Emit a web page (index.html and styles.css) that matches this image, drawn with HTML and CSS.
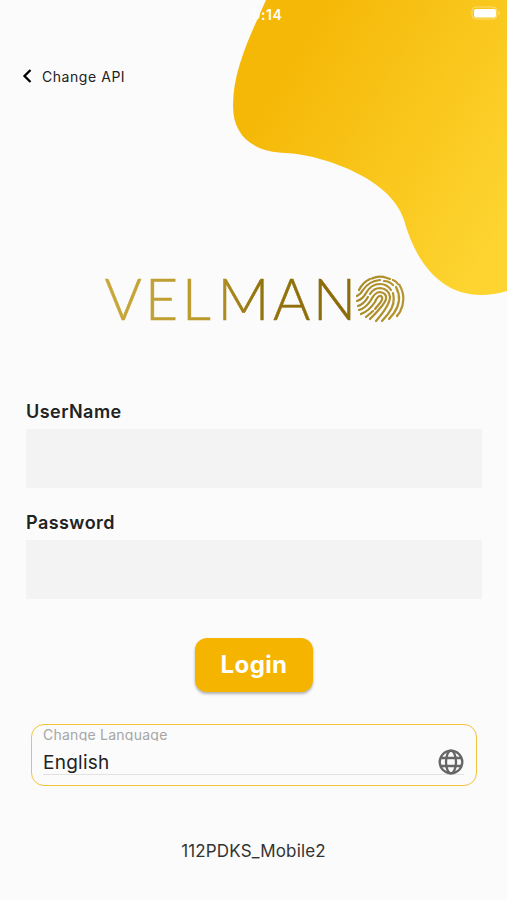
FILE: index.html
```html
<!DOCTYPE html>
<html lang="en">
<head>
  <meta charset="UTF-8">
  <meta name="viewport" content="width=device-width, initial-scale=1.0">
  <title>Velmano Login</title>
  <link rel="stylesheet" href="styles.css">
</head>
<body>
  <svg class="blob" width="287" height="300" viewBox="220 0 287 300">
    <defs>
      <linearGradient id="yellow" gradientUnits="userSpaceOnUse" x1="270" y1="90" x2="500" y2="230">
        <stop offset="0" stop-color="#f5b807"/>
        <stop offset="1" stop-color="#fdd430"/>
      </linearGradient>
    </defs>
    <path fill="url(#yellow)" d="M266 0C250 36 233 70 233 106C233 135 252 152 286 153C315 154 390 175 404 220C416 264 442 295 481 295Q494 295 507 291V0Z"/>
  </svg>

  <header class="status-bar">
    <span class="time">9:14</span>
    <svg class="battery" width="30" height="14" viewBox="0 0 30 14">
      <rect x="1" y="1" width="25" height="12" rx="4" fill="none" stroke="#fff" stroke-opacity=".4"/>
      <rect x="3" y="3" width="22" height="8.500" rx="2" fill="#fff"/>
      <path d="M27.500 5v4q1.500-.5 1.500-2t-1.500-2" fill="#fff" fill-opacity=".4"/>
    </svg>
  </header>

  <a class="back" href="#">
    <svg width="10" height="14" viewBox="0 0 10 14"><path d="M8.500 1L2.500 7l6 6" fill="none" stroke="#000" stroke-width="2.300"/></svg>
    <span>Change API</span>
  </a>

  <div class="logo">
    <svg width="304" height="72" viewBox="102 264 304 72">
      <defs>
        <linearGradient id="gold" gradientUnits="userSpaceOnUse" x1="105" y1="0" x2="405" y2="0">
          <stop offset="0" stop-color="#c9a83a"/>
          <stop offset=".35" stop-color="#b9982c"/>
          <stop offset=".5" stop-color="#94750d"/>
          <stop offset=".8" stop-color="#8a6a08"/>
          <stop offset="1" stop-color="#bb9a35"/>
        </linearGradient>
        <linearGradient id="print" gradientUnits="userSpaceOnUse" x1="356" y1="0" x2="405" y2="0">
          <stop offset="0" stop-color="#a88a26"/>
          <stop offset="1" stop-color="#b5952f"/>
        </linearGradient>
      </defs>
      <text class="wordmark" y="320" x="104.500 145 182 217.500 273 313">VELMAN</text>
      <g fill="none" stroke="url(#print)" stroke-width="2.200" stroke-linecap="round">
        <path d="M359 290Q363 282 370 279M372 278.500Q379 275 387 278L390 279M393 280Q396 281 398 284M399.500 285Q407 298 400 312L397 316"/>
        <path d="M357 296Q361 294 363 290Q369 281 380 280M384 281Q389 281 393 285M396 287Q403 300 394 313L389 319"/>
        <path d="M357 301Q363 299 366 293Q371 284 380 284Q387 284 391 290M393 293Q396 304 388 314L382 321"/>
        <path d="M358 306Q364 304 368 297M370 294Q374 288 380 288Q389 289 390 297Q390 305 376 321"/>
        <path d="M359 310Q366 308 371 300Q375 292 380 292Q387 293 386 299Q385 304 370 319"/>
        <path d="M361 314Q369 311 375 302Q378 295 381 296Q384 298 380 303L375 309M373 311L366 317"/>
      </g>
    </svg>
  </div>

  <form class="login-form">
    <label for="username">UserName</label>
    <input type="text" id="username">
    <label for="password">Password</label>
    <input type="password" id="password">
    <button type="button">Login</button>
  </form>

  <div class="language">
    <span class="language-label">Change Language</span>
    <div class="language-value">
      <span>English</span>
      <svg width="26" height="26" viewBox="0 0 26 26" fill="none" stroke="#666" stroke-width="2.300">
        <circle cx="13" cy="13" r="11.300"/>
        <ellipse cx="13" cy="13" rx="5" ry="11.300"/>
        <path d="M2 9h22M2 17h22"/>
      </svg>
    </div>
  </div>

  <footer>112PDKS_Mobile2</footer>
</body>
</html>
```

FILE: styles.css
```css
* {
  box-sizing: border-box;
}
body {
  margin: 0;
  height: 900px;
  background-color: #fbfbfb;
  font-family: Inter, sans-serif;
  color: #222;
  display: flex;
  flex-direction: column;
  overflow: hidden;
}
.blob {
  position: absolute;
  top: 0;
  right: 0;
  z-index: -1;
}
.status-bar {
  height: 28px;
  display: grid;
  grid-template-columns: 1fr auto 1fr;
  align-items: center;
  padding: 0 6px;
  color: #fff;
  font-size: 14px;
  font-weight: 600;
  letter-spacing: 0.6px;
}
.time {
  grid-column: 2;
  padding-left: 27px;
}
.battery {
  justify-self: end;
  margin-top: -2px;
}
.back {
  display: flex;
  align-items: center;
  gap: 10px;
  height: 24px;
  margin: 36px 0 0 22px;
  color: #222;
  font-size: 14px;
  letter-spacing: 0.55px;
  text-decoration: none;
}
.logo {
  height: 72px;
  margin: 176px 0 0 102px;
}
.wordmark {
  font-family: Lato, sans-serif;
  font-size: 57px;
  font-weight: 300;
  fill: url(#gold);
  stroke: url(#gold);
  stroke-width: 0.5px;
}
.login-form {
  display: flex;
  flex-direction: column;
  margin: 64px 25px 0 26px;
}
label {
  height: 29px;
  line-height: 24px;
  font-size: 18px;
  font-weight: 600;
  letter-spacing: 0.45px;
}
input {
  width: 100%;
  height: 59px;
  margin-bottom: 23px;
  padding: 0 12px;
  border: none;
  background-color: #f3f3f3;
  font-size: 18px;
}
button {
  align-self: center;
  width: 118px;
  height: 54px;
  margin-top: 16px;
  padding-bottom: 3px;
  border: none;
  border-radius: 12px;
  background-color: #f5b400;
  box-shadow: 0 2px 3px rgba(0,0,0,0.3);
  color: #fff;
  font-family: inherit;
  font-size: 24px;
  font-weight: 700;
  letter-spacing: 0.4px;
}
.language {
  height: 62px;
  margin: 32px 30px 0 31px;
  padding: 0 12px 0 11px;
  border: 1.5px solid #f3c33c;
  border-radius: 13px;
}
.language-label {
  display: block;
  height: 16px;
  line-height: 19px;
  overflow: hidden;
  color: #a6a6a6;
  font-size: 14px;
  letter-spacing: 0.25px;
}
.language-value {
  display: flex;
  justify-content: space-between;
  align-items: center;
  height: 34px;
  padding-top: 9px;
  border-bottom: 1px solid #e2e2e2;
  font-size: 19px;
  letter-spacing: 0.25px;
}
footer {
  margin-top: 54px;
  text-align: center;
  font-size: 17px;
  line-height: 22px;
  letter-spacing: 0.15px;
  color: #333;
}
```
